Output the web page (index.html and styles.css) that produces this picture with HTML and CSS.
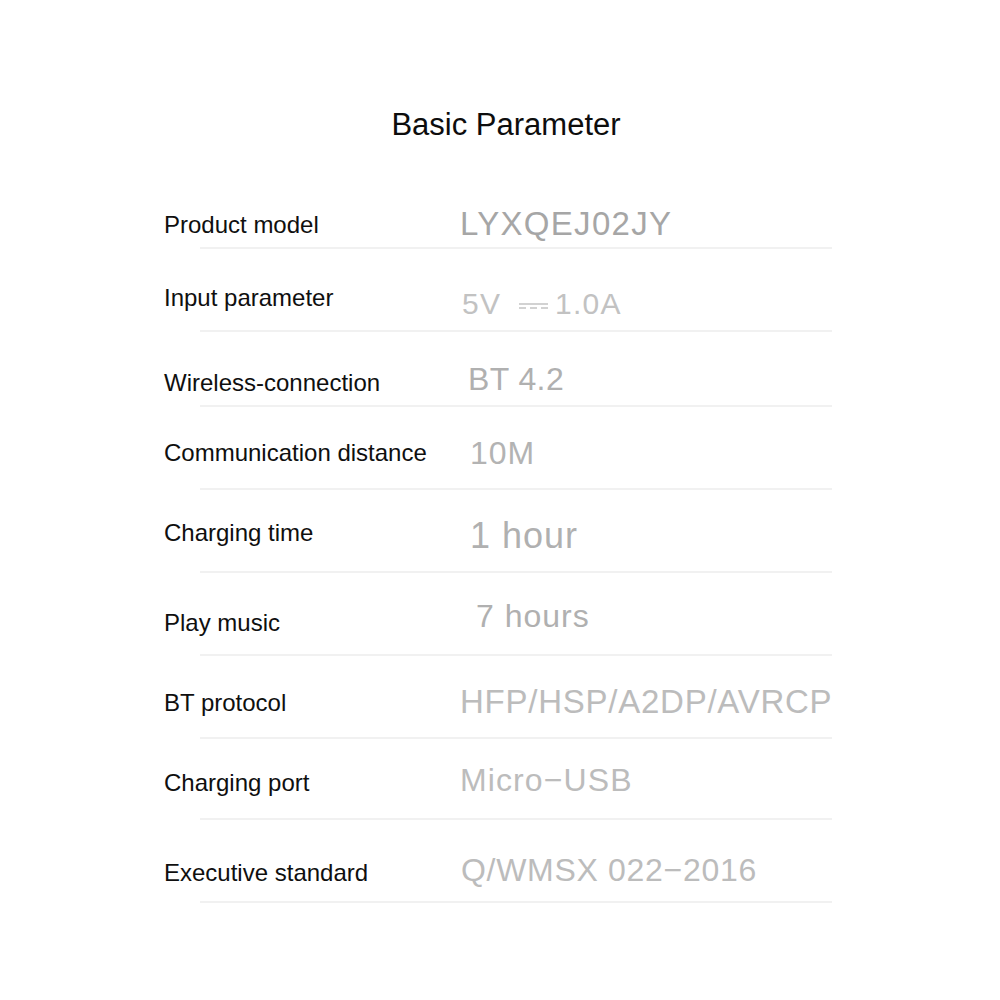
FILE: index.html
```html
<!DOCTYPE html>
<html lang="en">
<head>
<meta charset="utf-8">
<title>Basic Parameter</title>
<link rel="stylesheet" href="styles.css">
</head>
<body>
<main class="sheet">
  <h1 class="title">Basic Parameter</h1>
  <div class="table">
    <div class="row r1">
      <div class="label">Product model</div>
      <div class="value">LYXQEJ02JY</div>
    </div>
    <div class="row r2">
      <div class="label">Input parameter</div>
      <div class="value">5V<span class="dc" aria-label="DC"></span>1.0A</div>
    </div>
    <div class="row r3">
      <div class="label">Wireless-connection</div>
      <div class="value">BT 4.2</div>
    </div>
    <div class="row r4">
      <div class="label">Communication distance</div>
      <div class="value">10M</div>
    </div>
    <div class="row r5">
      <div class="label">Charging time</div>
      <div class="value">1 hour</div>
    </div>
    <div class="row r6">
      <div class="label">Play music</div>
      <div class="value">7 hours</div>
    </div>
    <div class="row r7">
      <div class="label">BT protocol</div>
      <div class="value">HFP/HSP/A2DP/AVRCP</div>
    </div>
    <div class="row r8">
      <div class="label">Charging port</div>
      <div class="value">Micro&#8722;USB</div>
    </div>
    <div class="row r9">
      <div class="label">Executive standard</div>
      <div class="value">Q/WMSX 022&#8722;2016</div>
    </div>
  </div>
</main>
</body>
</html>
```

FILE: styles.css
```css
html, body {
  margin: 0;
  padding: 0;
  background: #ffffff;
}

body {
  font-family: "Liberation Sans", Arial, Helvetica, sans-serif;
  color: #111111;
}

.sheet {
  width: 1000px;
  height: 1000px;
  overflow: hidden;
}

.title {
  margin: 0;
  padding: 107px 0 0 12px;
  font-size: 31px;
  line-height: 36px;
  font-weight: 400;
  text-align: center;
  color: #0d0d0d;
}

.table {
  margin-left: 164px;
  width: 668px;
}

.row {
  --h: 81px;
  --lb: 20px;
  --vb: 20px;
  --vx: 0px;
  --fs: 32px;
  --ls: 1px;
  --vc: #b0b0b0;
  display: grid;
  grid-template-columns: 296px 1fr;
  grid-template-rows: var(--h) 2px;
  align-items: end;
}

.row::after {
  content: "";
  grid-column: 1 / -1;
  align-self: stretch;
  margin-left: 36px;
  background: #f1f1f1;
}

.label {
  font-size: 24px;
  line-height: 24px;
  padding-bottom: var(--lb);
  white-space: nowrap;
  color: #0f0f0f;
}

.value {
  font-size: var(--fs);
  line-height: var(--fs);
  letter-spacing: var(--ls);
  padding-bottom: var(--vb);
  padding-left: var(--vx);
  white-space: nowrap;
  color: var(--vc);
}

.dc {
  display: inline-block;
  width: 29px;
  height: 6px;
  margin: 0 7px 0 18px;
  vertical-align: 5px;
  border-top: 2px solid #d2d2d2;
  box-sizing: border-box;
  background: repeating-linear-gradient(90deg, #d2d2d2 0 7px, transparent 7px 11px) left bottom / 100% 2px no-repeat;
}

.r1 { --h: 104px; --lb: 10px; --vb: 7px;  --vx: 0px;  --fs: 33px; --ls: 1.3px; --vc: #a6a6a6; }
.r2 { --lb: 20px; --vb: 11px; --vx: 2px;  --fs: 30px; --ls: 1.2px; --vc: #c2c2c2; }
.r3 { --h: 73px;  --lb: 10px; --vb: 10px; --vx: 8px;  --fs: 32px; --ls: 0.4px; --vc: #b0b0b0; }
.r4 { --lb: 23px; --vb: 19px; --vx: 10px; --fs: 32px; --ls: 1px;   --vc: #b3b3b3; }
.r5 { --lb: 26px; --vb: 17px; --vx: 10px; --fs: 36px; --ls: 1px;   --vc: #b0b0b0; }
.r6 { --lb: 19px; --vb: 22px; --vx: 16px; --fs: 32px; --ls: 1px;   --vc: #b0b0b0; }
.r7 { --lb: 22px; --vb: 19px; --vx: 0px;  --fs: 33px; --ls: 0.75px; --vc: #bcbcbc; }
.r8 { --h: 79px;  --lb: 23px; --vb: 22px; --vx: 0px;  --fs: 32px; --ls: 1.1px; --vc: #bcbcbc; }
.r9 { --lb: 16px; --vb: 15px; --vx: 1px;  --fs: 32px; --ls: 0.7px; --vc: #bcbcbc; }
```
